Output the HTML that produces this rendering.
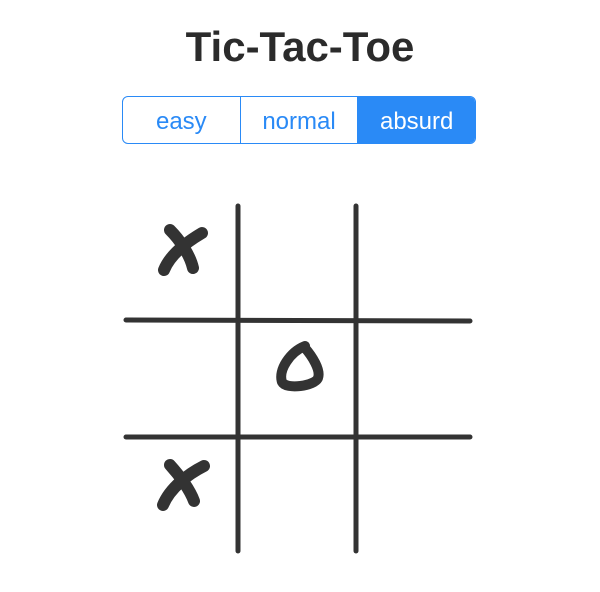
<!DOCTYPE html>
<html><head><style>
body{margin:0;width:600px;height:592px;background:#fff;font-family:"Liberation Sans",sans-serif;position:relative;overflow:hidden}
h1{position:absolute;top:23px;left:0;width:600px;text-align:center;margin:0;font-size:42px;font-weight:bold;color:#2b2b2b}
.seg{position:absolute;left:122px;top:96px;width:352px;height:46px;border:1px solid #2a8af6;border-radius:6px;display:flex;overflow:hidden}
.seg div{flex:1;display:flex;align-items:center;justify-content:center;color:#2a8af6;font-size:24px;padding-top:3px}
.seg div+div{border-left:1px solid #2a8af6}
.seg .on{background:#2a8af6;color:#fff}
svg{position:absolute;left:0;top:0}
</style></head><body>
<h1>Tic-Tac-Toe</h1>
<div class="seg"><div>easy</div><div>normal</div><div class="on">absurd</div></div>
<svg width="600" height="592" fill="none" stroke="#333" stroke-linecap="round">
<g stroke-width="5">
<line x1="238" y1="206" x2="238" y2="551"/>
<line x1="356" y1="206" x2="356" y2="551"/>
<line x1="126" y1="320" x2="470" y2="321"/>
<line x1="126" y1="437" x2="470" y2="437"/>
</g>
<g stroke-width="12">
<path d="M202 233 C185 243 170 255 164 270"/>
<path d="M170 230 C180 240 190 255 193 268"/>
<path d="M204 466 C188 474 170 488 163 505"/>
<path d="M170 465 C180 476 190 490 194 501"/>
<path d="M305 346 C290 352 278 370 282 382 C286 390 315 386 318 378 C321 370 312 356 305 348" stroke-width="10"/>
</g>
</svg>
</body></html>
